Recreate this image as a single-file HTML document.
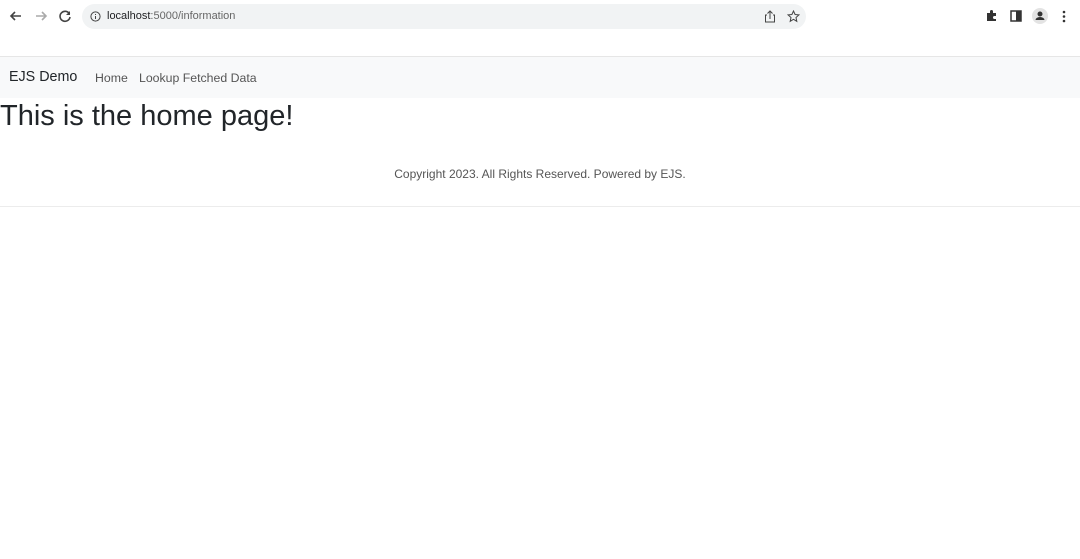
<!DOCTYPE html>
<html><head><style>
body{margin:0;width:1080px;height:559px;background:#fff;font-family:"Liberation Sans",sans-serif;overflow:hidden;position:relative}
.tb{position:absolute;top:0;left:0;width:1080px;height:56px;border-bottom:1px solid #e6e6e6;background:#fff}
.url{position:absolute;left:82px;top:4px;width:724px;height:25px;background:#f1f3f4;border-radius:13px}
.url span{position:absolute;left:25px;top:6px;font-size:11px;color:#202124}
.nav{position:absolute;top:57px;left:0;width:1080px;height:41px;background:#f8f9fa}
.nav .b{position:absolute;left:9px;top:12px;font-size:14.3px;color:#212529}
.nav .l{position:absolute;top:14px;font-size:12.3px;color:#555}
h1{position:absolute;left:0;top:100px;margin:0;font-weight:400;font-size:29px;color:#212529}
.f{position:absolute;top:167px;width:1080px;text-align:center;font-size:12px;color:#555}
.hr{position:absolute;top:206px;left:0;width:1080px;height:1px;background:#ececec}
svg{position:absolute}
</style></head><body>
<div class="tb">
<svg style="left:9px;top:9px" width="14" height="14" viewBox="0 0 14 14"><path d="M12 7H2M6 3L2 7l4 4" stroke="#444" stroke-width="1.6" fill="none"/></svg>
<svg style="left:34px;top:9px" width="14" height="14" viewBox="0 0 14 14"><path d="M2 7h10M8 3l4 4-4 4" stroke="#aaa" stroke-width="1.6" fill="none"/></svg>
<svg style="left:58px;top:9px" width="14" height="14" viewBox="0 0 14 14"><path d="M11.5 5A5 5 0 1 0 12 8" stroke="#444" stroke-width="1.6" fill="none"/><path d="M12 2v4H8z" fill="#444"/></svg>
<div class="url"><svg style="left:8px;top:7px" width="11" height="11" viewBox="0 0 11 11"><circle cx="5.5" cy="5.5" r="4.6" stroke="#444" fill="none"/><path d="M5.5 5v3M5.5 3v1" stroke="#444"/></svg><span><b style="font-weight:400;color:#202124">localhost</b><span style="position:static;color:#666">:5000/information</span></span>
<svg style="left:682px;top:6px" width="12" height="13" viewBox="0 0 12 13"><path d="M3 5H1.5v7h9V5H9M6 9V1M3.5 3.5L6 1l2.5 2.5" stroke="#444" fill="none"/></svg>
<svg style="left:705px;top:6px" width="13" height="13" viewBox="0 0 13 13"><path d="M6.5 1l1.6 3.5 3.8.4-2.9 2.6.8 3.8-3.3-2-3.3 2 .8-3.8L1.1 4.9l3.8-.4z" stroke="#444" fill="none"/></svg></div>
<svg style="left:985px;top:9px" width="13" height="13" viewBox="0 0 13 13"><path d="M2 4h3V2.5a1.5 1.5 0 0 1 3 0V4h3v3h-1.5a1.5 1.5 0 0 0 0 3H11v2H2z" fill="#333"/></svg>
<svg style="left:1010px;top:10px" width="12" height="12" viewBox="0 0 12 12"><rect x="1" y="1" width="10" height="10" stroke="#333" stroke-width="1.5" fill="none"/><rect x="6" y="1" width="5" height="10" fill="#333"/></svg>
<svg style="left:1031px;top:7px" width="18" height="18" viewBox="0 0 18 18"><circle cx="9" cy="9" r="8" fill="#e3e3e3"/><circle cx="9" cy="7" r="2.5" fill="#333"/><path d="M4.5 13a4.5 3 0 0 1 9 0z" fill="#333"/></svg>
<svg style="left:1062px;top:10px" width="4" height="13" viewBox="0 0 4 13"><circle cx="2" cy="2" r="1.3" fill="#333"/><circle cx="2" cy="6.5" r="1.3" fill="#333"/><circle cx="2" cy="11" r="1.3" fill="#333"/></svg>
</div>
<div class="nav"><span class="b">EJS Demo</span><span class="l" style="left:95px">Home</span><span class="l" style="left:139px">Lookup Fetched Data</span></div>
<h1>This is the home page!</h1>
<div class="f">Copyright 2023. All Rights Reserved. Powered by EJS.</div>
<div class="hr"></div>
</body></html>
